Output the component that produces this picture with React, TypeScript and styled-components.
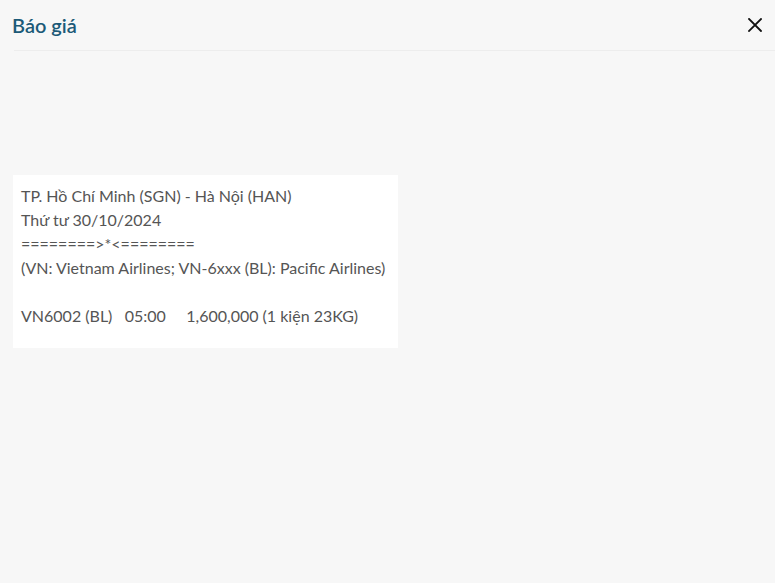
import React from "react";
import styled, { createGlobalStyle } from "styled-components";

const Global = createGlobalStyle`
  html, body { margin: 0; padding: 0; background: #f7f7f7; }
  body { font-family: Lato, "Noto Sans", sans-serif; }
`;

const Page = styled.div`
  width: 775px;
  height: 583px;
  background: #f7f7f7;
  display: flex;
  flex-direction: column;
`;

const Header = styled.header`
  height: 51px;
  margin-left: 14px;
  padding-right: 12px;
  border-bottom: 1px solid #ededed;
  display: flex;
  align-items: center;
  justify-content: space-between;
  box-sizing: border-box;
`;

const Title = styled.h1`
  margin: 0 0 0 -2px;
  font-size: 20px;
  font-weight: 600;
  color: #1c5a78;
`;

const CloseButton = styled.button`
  border: none;
  background: transparent;
  padding: 0;
  width: 16px;
  height: 16px;
  display: flex;
  align-items: center;
  justify-content: center;
  cursor: pointer;
`;

const Body = styled.main`
  padding: 124px 0 0 13px;
`;

const Card = styled.pre`
  margin: 0;
  width: 385px;
  box-sizing: border-box;
  background: #ffffff;
  padding: 9px 8px 20px 8px;
  font-family: Lato, "Noto Sans", sans-serif;
  font-size: 16px;
  line-height: 24px;
  color: #555555;
  white-space: pre-wrap;
`;

const text = `TP. Hồ Chí Minh (SGN) - Hà Nội (HAN)
Thứ tư 30/10/2024
========>*<========
(VN: Vietnam Airlines; VN-6xxx (BL): Pacific Airlines)

VN6002 (BL)   05:00     1,600,000 (1 kiện 23KG)`;

export default function App() {
  return (
    <Page>
      <Global />
      <Header>
        <Title>Báo giá</Title>
        <CloseButton aria-label="Đóng">
          <svg width="14" height="14" viewBox="0 0 14 14">
            <path d="M1 1 L13 13 M13 1 L1 13" stroke="#111" strokeWidth="1.8" strokeLinecap="square" />
          </svg>
        </CloseButton>
      </Header>
      <Body>
        <Card>{text}</Card>
      </Body>
    </Page>
  );
}
